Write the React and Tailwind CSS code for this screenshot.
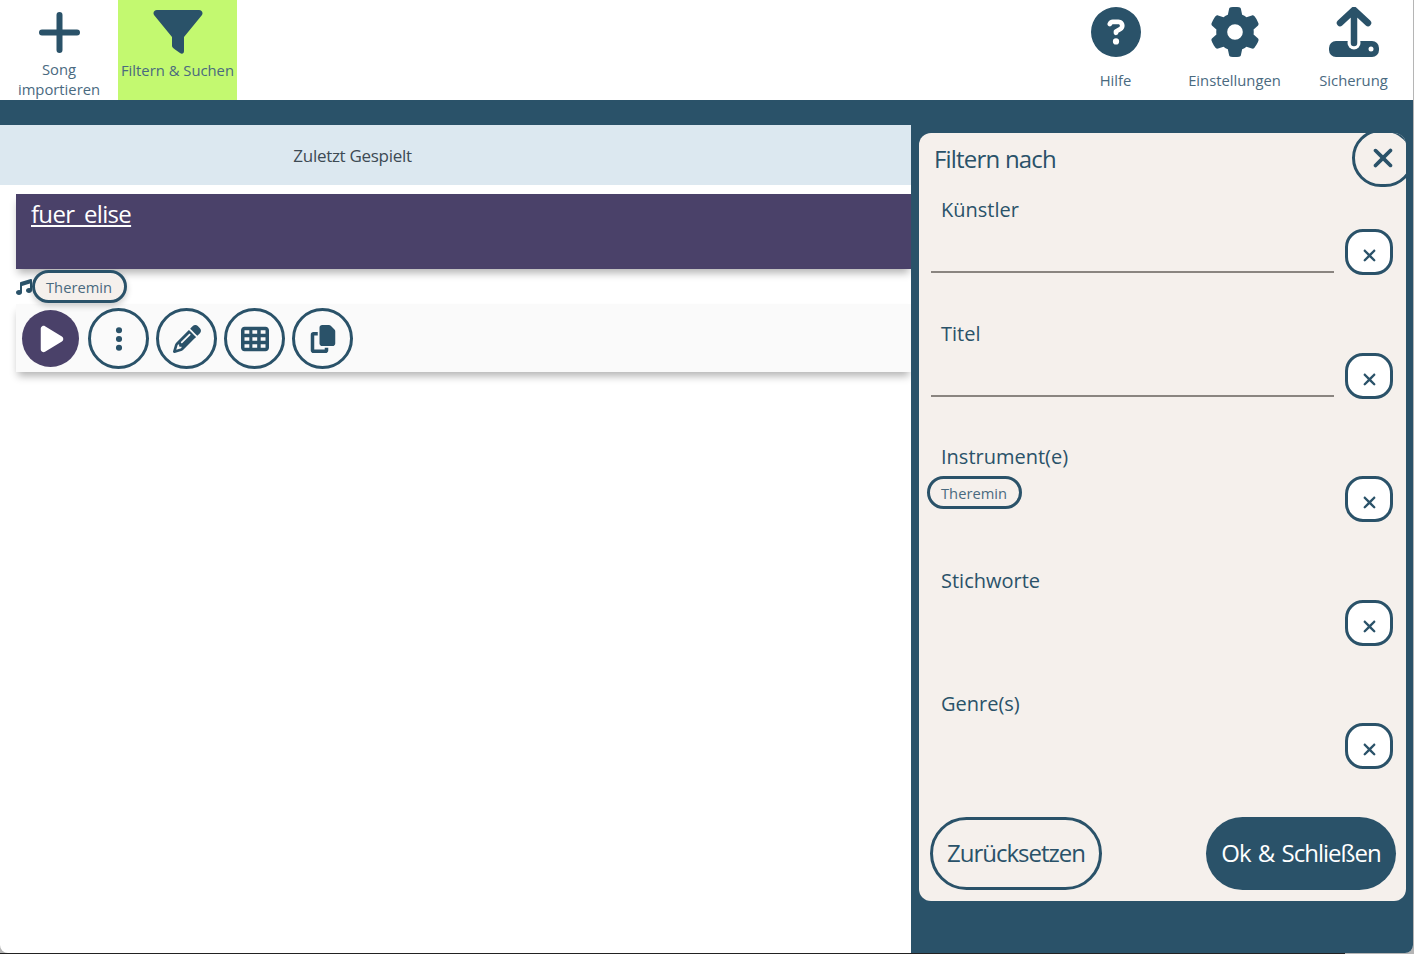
import React from 'react';
import {
  FaCircleQuestion,
  FaCopy,
  FaEllipsisVertical,
  FaGear,
  FaMusic,
  FaPencil,
  FaPlay,
  FaTableCells,
  FaXmark,
} from 'react-icons/fa6';

const PlusIcon = () => (
  <svg width="41" height="41" viewBox="0 0 41 41" fill="none" stroke="#2a5269" strokeWidth="6" strokeLinecap="round">
    <path d="M20.500 3v35M3 20.500h35" />
  </svg>
);

const FilterIcon = () => (
  <svg width="50" height="44" viewBox="0 0 50 44" fill="#2a5269">
    <path d="M4 0h42c3 0 4.500 3 2.800 5.300L31 27v14c0 2.500-2 3.500-4 2l-5-3.500c-1-.8-3-2-3-3.500V27L1.200 5.300C-.5 3 1 0 4 0z" />
  </svg>
);

const UploadIcon = () => (
  <svg width="50" height="50" viewBox="0 0 50 50" fill="none">
    <rect x="0" y="34" width="50" height="16" rx="7" fill="#2a5269" />
    <circle cx="25" cy="36" r="6.500" fill="#fff" />
    <circle cx="42" cy="42" r="2.500" fill="#fff" />
    <path d="M25 36V3M11 16 25 3l14 13" stroke="#2a5269" strokeWidth="6.500" strokeLinecap="round" strokeLinejoin="round" />
  </svg>
);

const ToolbarButton = ({ label, active, iconClass, children }) => (
  <button
    className={`flex h-[100px] w-full flex-col items-center text-[14.8px] leading-[19.5px] text-[#4a6a7f] ${active ? 'bg-[#c3f970]' : 'bg-white'}`}
  >
    <div className={`flex items-center justify-center ${iconClass}`}>{children}</div>
    <span className="block">{label}</span>
  </button>
);

const RoundAction = ({ children }) => (
  <button className="flex h-[61px] w-[61px] items-center justify-center rounded-full border-[3px] border-[#2a5269] text-[#2a5269]">
    {children}
  </button>
);

const FilterRow = ({ label, hasInput, chip }) => (
  <div className="flex h-[123.5px] pl-3 pr-[13px]">
    <div className="flex-1">
      <div className="pl-[10px] text-[20px] leading-[27px] text-[#2a5269]">{label}</div>
      {hasInput && <div className="mt-[48px] border-b-2 border-[#8a8580]" />}
      {chip && (
        <span className="mt-[6px] -ml-[4px] flex h-[33px] w-[95px] items-center justify-center rounded-[17px] border-[3px] border-[#2a5269] pr-px pt-px text-[14.7px] text-[#4a6a7f]">
          Theremin
        </span>
      )}
    </div>
    <button className="mt-[33px] ml-[11px] flex h-[46px] w-[48px] items-center justify-center rounded-[18px] border-[3px] border-[#2a5269] bg-white pt-[7px] text-[#2a5269]">
      <FaXmark size={19} />
    </button>
  </div>
);

const App = () => {
  return (
    <div className="h-[954px] w-[1414px] overflow-hidden bg-[#b5b5b5] font-['Open_Sans',sans-serif]">
      <div className="h-[953px] w-[1413px] overflow-hidden rounded-b-lg bg-white">
        <div className="flex h-[100px] justify-between">
          <div className="flex">
            <div className="w-[118px]">
              <ToolbarButton label={<>Song<br />importieren</>} iconClass="h-[60px] pt-[5px]">
                <PlusIcon />
              </ToolbarButton>
            </div>
            <div className="w-[119px]">
              <ToolbarButton label="Filtern & Suchen" active iconClass="h-[61px] pt-[2px]">
                <FilterIcon />
              </ToolbarButton>
            </div>
          </div>
          <div className="flex">
            <div className="w-[119px]">
              <ToolbarButton label="Hilfe" iconClass="h-[71px] pb-[7px]">
                <FaCircleQuestion size={50} color="#2a5269" />
              </ToolbarButton>
            </div>
            <div className="w-[119px]">
              <ToolbarButton label="Einstellungen" iconClass="h-[71px] pb-[7px]">
                <FaGear size={50} color="#2a5269" />
              </ToolbarButton>
            </div>
            <div className="w-[119px]">
              <ToolbarButton label="Sicherung" iconClass="h-[71px] pb-[8px]">
                <UploadIcon />
              </ToolbarButton>
            </div>
          </div>
        </div>

        <div className="h-[25px] bg-[#2a5269]" />

        <div className="flex h-[828px]">
          <div className="w-[911px]">
            <div className="h-[60px] bg-[#dce8f0] pr-[206px] pt-px text-center text-[17px] leading-[60px] tracking-[-0.3px] text-[#3d4a54]">
              Zuletzt Gespielt
            </div>
            <div className="mt-[9px] pl-4">
              <div className="h-[75px] bg-[#4a4169] pl-[15px] pt-[2px] text-[24px] leading-[35px] tracking-[-0.7px] text-white underline [text-decoration-skip-ink:none] shadow-[0_6px_8px_-2px_rgba(0,0,0,0.3)]">
                fuer_elise
              </div>
              <div className="flex h-[35px] items-start pt-px">
                <FaMusic size={16} color="#2a5269" className="mt-[9px]" />
                <span className="flex h-[33px] w-[95px] items-center justify-center rounded-[17px] border-[3px] border-[#2a5269] bg-[#f5f0ec] pr-px pt-px text-[14.7px] text-[#4a6a7f] shadow-[0_3px_6px_rgba(0,0,0,0.2)]">
                  Theremin
                </span>
              </div>
              <div className="flex h-[68px] items-center gap-[7px] bg-[#fafafa] pl-[6px] pt-px shadow-[0_6px_8px_-2px_rgba(0,0,0,0.3)]">
                <button className="mr-[2px] flex h-[57px] w-[57px] items-center justify-center rounded-full bg-[#4a4169] pl-[3px] text-white">
                  <FaPlay size={30} />
                </button>
                <RoundAction><FaEllipsisVertical size={28} /></RoundAction>
                <RoundAction><FaPencil size={28} /></RoundAction>
                <RoundAction><FaTableCells size={28} /></RoundAction>
                <RoundAction><FaCopy size={28} /></RoundAction>
              </div>
            </div>
          </div>

          <div className="flex-1 bg-[#2a5269] pl-2 pr-[7px] pt-2">
            <div className="relative flex h-[768px] flex-col overflow-hidden rounded-xl bg-[#f5f0ec]">
              <h2 className="pl-[15px] pt-[8px] text-[24px] leading-[35px] tracking-[-0.8px] text-[#2a5269]">Filtern nach</h2>
              <button className="absolute -right-[8px] -top-[4px] flex h-[58px] w-[62px] items-center justify-center rounded-full border-[3px] border-[#2a5269] text-[#2a5269]">
                <FaXmark size={30} />
              </button>
              <div className="mt-[20px] flex-1">
                <FilterRow label="Künstler" hasInput />
                <FilterRow label="Titel" hasInput />
                <FilterRow label="Instrument(e)" chip />
                <FilterRow label="Stichworte" />
                <FilterRow label="Genre(s)" />
              </div>
              <div className="flex justify-between pb-[11px] pl-[11px] pr-[10px]">
                <button className="h-[73px] w-[172px] rounded-full border-[3px] border-[#2a5269] pb-[2px] text-[24px] tracking-[-1px] text-[#2a5269]">
                  Zurücksetzen
                </button>
                <button className="h-[73px] w-[190px] rounded-full bg-[#2a5269] pb-[2px] text-[24px] tracking-[-1px] text-white [word-spacing:2px]">
                  Ok &amp; Schließen
                </button>
              </div>
            </div>
          </div>
        </div>
      </div>
      <div className="h-px w-[1345px] bg-[#222]" />
    </div>
  );
};

export default App;
